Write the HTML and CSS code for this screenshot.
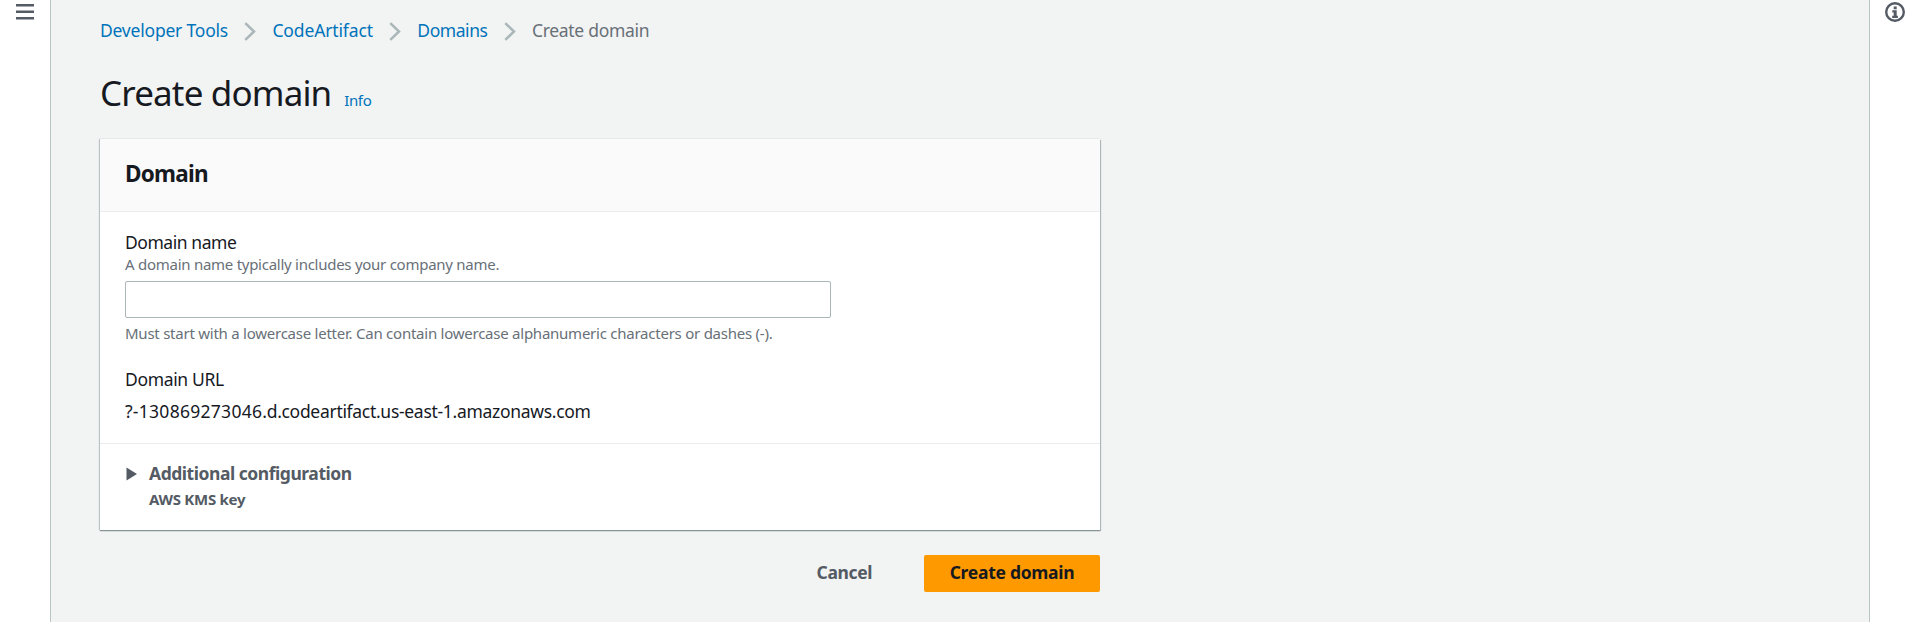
FILE: index.html
```html
<!DOCTYPE html>
<html lang="en">
<head>
<meta charset="utf-8">
<title>Create domain</title>
<link rel="stylesheet" href="styles.css">
</head>
<body>
<div class="app">
  <aside class="rail rail-left">
    <svg class="menu-icon" width="18" height="16" viewBox="0 0 18 16"><path d="M0 1.3h18M0 7.8h18M0 14.3h18" stroke="#545b64" stroke-width="2.5"/></svg>
  </aside>
  <main class="content">
    <nav class="crumbs">
      <a class="crumb-tools">Developer Tools</a>
      <svg class="chevron" width="12" height="19" viewBox="0 0 12 19"><path d="M1.3 1.2l8.7 8.3-8.7 8.3"/></svg>
      <a class="crumb-service">CodeArtifact</a>
      <svg class="chevron" width="12" height="19" viewBox="0 0 12 19"><path d="M1.3 1.2l8.7 8.3-8.7 8.3"/></svg>
      <a class="crumb-domains">Domains</a>
      <svg class="chevron" width="12" height="19" viewBox="0 0 12 19"><path d="M1.3 1.2l8.7 8.3-8.7 8.3"/></svg>
      <span class="crumb-current">Create domain</span>
    </nav>
    <div class="title"><h1>Create domain</h1><a class="info">Info</a></div>
    <section class="card">
      <header class="card-header"><h2>Domain</h2></header>
      <div class="card-body">
        <label class="label" for="name">Domain name</label>
        <div class="hint">A domain name typically includes your company name.</div>
        <input class="field" id="name" type="text">
        <div class="hint constraint">Must start with a lowercase letter. Can contain lowercase alphanumeric characters or dashes (-).</div>
        <div class="label url-label">Domain URL</div>
        <div class="url"><span class="account">?-130869273046</span>.d.codeartifact.us-east-1.amazonaws.com</div>
      </div>
      <div class="more">
        <svg class="caret" width="11" height="14" viewBox="0 0 11 14"><path d="M.5 .5v13L11 7z" fill="#545b64"/></svg>
        <div>
          <div class="more-title">Additional configuration</div>
          <div class="more-sub">AWS KMS key</div>
        </div>
      </div>
    </section>
    <div class="actions">
      <button class="btn">Cancel</button>
      <button class="btn primary">Create domain</button>
    </div>
  </main>
  <aside class="rail rail-right">
    <svg class="info-icon" width="20" height="20" viewBox="0 0 20 20"><circle cx="10" cy="10" r="8.8" fill="none" stroke="#545b64" stroke-width="2.4"/><path d="M8.7 4.5h3v2.7h-3zM7.3 8.3h4.4v5.4h1.2v2.2H7.2v-2.2h1.5v-3.2H7.3z" fill="#545b64"/></svg>
  </aside>
</div>
</body>
</html>
```
FILE: styles.css
```css
* { box-sizing: border-box; }
body { margin: 0; font-family: "Noto Sans", sans-serif; font-size: 17.5px; line-height: 24px; color: #16191f; background: #fff; }
.app { display: flex; height: 622px; overflow: hidden; }
.rail { flex: none; background: #fff; }
.rail-left { width: 51px; border-right: 1px solid #bac5c6; padding: 4px 0 0 16px; }
.rail-right { width: 50px; border-left: 1px solid #bac5c6; padding: 2px 0 0 15px; }
.rail svg { display: block; }
.content { flex: 1; background: #f2f3f3; padding: 16px 0 0 49px; }
a { color: #0073bb; }

.crumbs { display: flex; align-items: center; height: 27px; color: #687078; }
.crumb-tools { letter-spacing: -.21px; }
.crumb-service { letter-spacing: -.13px; }
.crumb-domains { letter-spacing: -.43px; }
.crumb-current { letter-spacing: -.3px; }
.chevron { fill: none; stroke: #aab7b8; stroke-width: 2.5; margin: 3px 16.2px 0; }

.title { display: flex; align-items: baseline; margin-top: 28px; height: 44px; }
h1 { margin: 0; font-size: 35px; line-height: 44px; font-weight: 400; letter-spacing: -.85px; }
.info { font-size: 15px; margin-left: 12.8px; letter-spacing: -.35px; }

.card { width: 1000px; height: 391px; margin-top: 24px; background: #fff; box-shadow: 0 1px 1px #879596, 1px 1px 1px #b6bfc0, -1px 0 1px #c5cccd, 0 -1px 0 #eaeded; }
.card-header { height: 73px; padding: 21px 25px 0; background: #fafafa; border-bottom: 1px solid #eaeded; }
h2 { margin: 0; font-size: 22.5px; line-height: 28px; font-weight: 700; letter-spacing: -.75px; }
.card-body { padding: 18px 25px 20px; }
.label { display: block; letter-spacing: -.45px; }
.hint { font-size: 15px; line-height: 20px; color: #687078; letter-spacing: -.265px; }
.hint.constraint { letter-spacing: -.243px; }
.field { display: block; width: 706px; height: 37px; margin: 7px 0 5px; border: 1px solid #aab7b8; border-radius: 2px; background: #fff; }
.url-label { margin-top: 24px; letter-spacing: -.35px; }
.url { margin-top: 8px; letter-spacing: -.3px; }
.account { letter-spacing: .28px; }

.more { display: flex; gap: 12px; border-top: 1px solid #eaeded; padding: 17px 26px; color: #545b64; font-weight: 700; }
.caret { margin-top: 6px; }
.more-title { letter-spacing: -.46px; }
.more-sub { font-size: 15px; line-height: 20px; margin-top: 4px; letter-spacing: -.27px; }

.actions { display: flex; justify-content: flex-end; width: 1000px; margin-top: 25px; }
.btn { height: 37px; border: 0; padding: 0 0 3px; font: 700 17.5px/24px "Noto Sans", sans-serif; letter-spacing: -.4px; color: #545b64; background: none; border-radius: 2px; }
.btn.primary { width: 176px; margin-left: 52px; background: #ff9900; color: #16191f; letter-spacing: -.28px; }
```
